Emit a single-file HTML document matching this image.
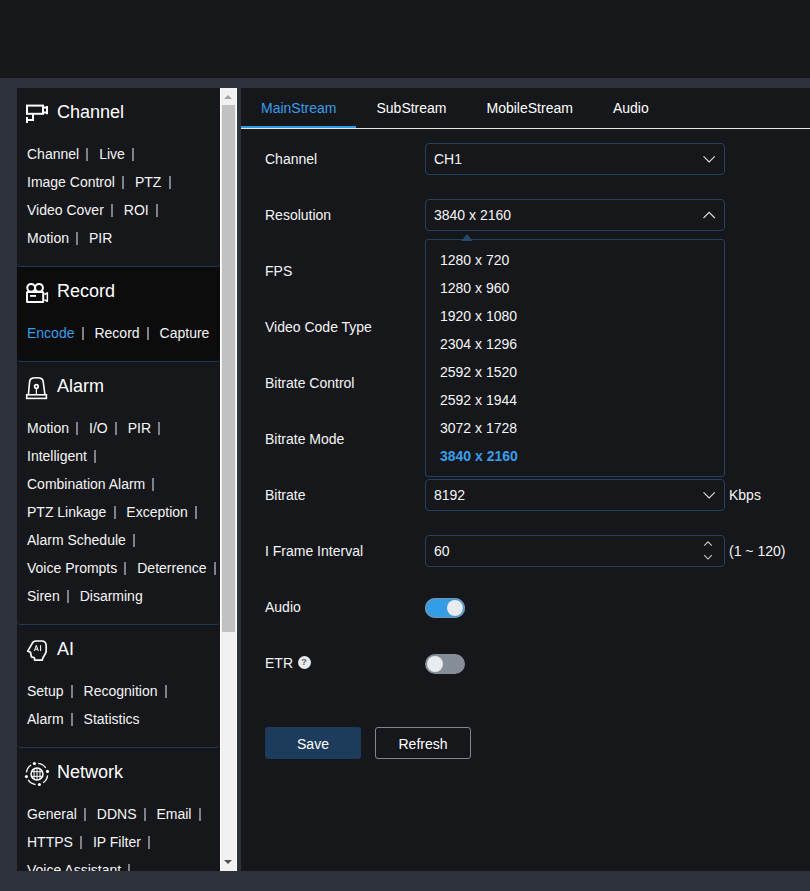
<!DOCTYPE html>
<html><head><meta charset="utf-8">
<style>
*{box-sizing:border-box;margin:0;padding:0}
html,body{width:810px;height:891px;overflow:hidden}
body{background:#2d3139;font-family:"Liberation Sans",sans-serif;color:#f2f2f2;position:relative;font-size:14px}
#top{position:absolute;left:0;top:0;width:810px;height:78px;background:#16181c}
#side{position:absolute;left:17px;top:88px;width:203px;height:783px;background:#15171b;overflow:hidden}
#sb{position:absolute;left:220px;top:88px;width:17px;height:783px;background:#f1f1f1;box-shadow:inset 1px 0 0 #fff,inset -1px 0 0 #fff}
#sb .th{position:absolute;left:2px;top:17px;width:13px;height:527px;background:#c1c1c1}
#sb .up{position:absolute;left:4px;top:7px;width:0;height:0;border-left:4px solid transparent;border-right:4px solid transparent;border-bottom:4px solid #a3a3a3}
#sb .dn{position:absolute;left:4px;top:772px;width:0;height:0;border-left:4px solid transparent;border-right:4px solid transparent;border-top:4px solid #505050}
#main{position:absolute;left:241px;top:88px;width:569px;height:783px;background:#15171b;overflow:hidden}
.sec{position:absolute;left:0;width:203px;border-bottom:1px solid #1e3a56;border-radius:0 0 4px 4px}
.hd{position:absolute;left:40px;font-size:18px;font-weight:normal;color:#fff;line-height:20px;white-space:nowrap}
.sec svg{position:absolute;left:0;top:0}
.ln{position:absolute;left:10px;font-size:14px;line-height:16px;white-space:nowrap;color:#f5f5f5}
.ln i{display:inline-block;width:2px;height:13px;background:#808287;vertical-align:-2px;margin:0 10.85px 0 7.15px}
.ln b{font-weight:normal;color:#399de8}
.tab{float:left;height:40px;line-height:40px;font-size:14px;padding:0 20px;color:#fff;white-space:nowrap}
.tab.on{color:#399de8;border-bottom:2px solid #2d9be8;height:40px}
#tl{position:absolute;left:0;top:40px;width:569px;height:1px;background:#e8e8e8}
.lb{position:absolute;left:24px;font-size:14px;line-height:16px;white-space:nowrap;color:#f5f5f5}
.sel{position:absolute;left:184px;width:300px;height:32px;border:1px solid #224262;border-radius:4px;font-size:14px;line-height:30px;padding-left:8px;color:#f5f5f5}
.sel svg{position:absolute;right:8px;top:10.5px}
#dd{position:absolute;left:184px;top:151px;width:300px;height:238px;border:1px solid #224262;border-radius:3px;background:#15171b}
#dd div{position:absolute;left:14px;font-size:14px;line-height:16px;white-space:nowrap;color:#f5f5f5}
.un{position:absolute;left:488px;font-size:14px;line-height:16px;white-space:nowrap;color:#f5f5f5}
.tg{position:absolute;left:184px;width:40px;height:20px;border-radius:10px}
.tg span{position:absolute;top:2px;width:16px;height:16px;border-radius:8px;background:#e8ebef}
.btn{position:absolute;top:639px;width:96px;height:32px;border-radius:3px;font-size:14px;line-height:34px;text-align:center;color:#fff}
</style></head><body>
<div id="top"></div>
<div id="side">
<div class="sec" style="top:0;height:179px"></div>
<div class="sec" style="top:179px;height:95px;background:#0c0c0d"></div>
<div class="sec" style="top:274px;height:263px"></div>
<div class="sec" style="top:537px;height:123px"></div>
<svg width="203" height="782" viewBox="17 88 203 782" style="position:absolute;left:0;top:0" fill="none" stroke="#fff" stroke-width="2">
<!-- channel -->
<rect x="27" y="105.6" width="16" height="8.2"/>
<path d="M44 107.5h3M44 112.5h3M47 106v8.2M33 114v6h-6M27 117v6"/>
<!-- record -->
<circle cx="31.2" cy="287.8" r="3.9"/><circle cx="39" cy="287.8" r="3.9"/>
<rect x="27" y="292" width="16.2" height="10.1" rx="0.5"/>
<path d="M30 295.9h6" stroke-width="1.8"/>
<path d="M44.4 294.5L47.35 292.9V301.3L44.4 299.7" stroke-width="1.5" stroke-linejoin="round"/>
<!-- alarm -->
<g stroke-width="1.6">
<rect x="26.7" y="394.8" width="19.7" height="3.6"/>
<path d="M28.4 394.5L29.6 381.6Q30 378.4 33 378Q36.4 377.5 39.8 378Q42.8 378.4 43.2 381.6L44.9 394.5"/>
<circle cx="36.4" cy="386.4" r="1.8"/>
<path d="M36.4 388.4v6" stroke-width="1.2"/>
</g>
<!-- ai -->
<path d="M31.9 643.8Q33.2 641 36 641H41.6Q46.2 641 46.2 646V650.5Q46.2 652.3 45.2 654L43 657.6L42.2 660.2H34.6L34.3 657.7L31.4 656.9L30.5 652.3L27.8 651.2Z" stroke-width="1.7" stroke-linejoin="round"/><path d="M34.4 651L36.35 645.3L38.3 651M35.1 649.2H37.6M40.6 645.2V651" stroke-width="1" stroke-linejoin="round"/>
<!-- network -->
<g stroke-width="1.5">
<circle cx="37" cy="774" r="6"/>
<path d="M31.3 771.7h11.4M31.3 776.3h11.4M34.05 768.8v10.4M37.02 768v12M40 768.8v10.4" stroke-width="1"/>
<circle cx="37" cy="774" r="10.7" stroke-width="1.3" stroke-dasharray="8.96 7.85" stroke-dashoffset="-3.8" transform="rotate(-104 37 774)"/>
</g>
<g fill="#fff" stroke="none">
<circle cx="34.4" cy="763.5" r="1.55"/><circle cx="47.5" cy="771.4" r="1.55"/><circle cx="26.4" cy="776.6" r="1.55"/><circle cx="39.4" cy="784.5" r="1.55"/>
</g>

</svg>
<h3 class="hd" style="top:14px">Channel</h3>
<div class="ln" style="top:58px">Channel<i></i>Live<i></i></div>
<div class="ln" style="top:86px">Image Control<i></i>PTZ<i></i></div>
<div class="ln" style="top:114px">Video Cover<i></i>ROI<i></i></div>
<div class="ln" style="top:142px">Motion<i></i>PIR</div>
<h3 class="hd" style="top:193px">Record</h3>
<div class="ln" style="top:237px"><b>Encode</b><i></i>Record<i></i>Capture</div>
<h3 class="hd" style="top:288px">Alarm</h3>
<div class="ln" style="top:332px">Motion<i></i>I/O<i></i>PIR<i></i></div>
<div class="ln" style="top:360px">Intelligent<i></i></div>
<div class="ln" style="top:388px">Combination Alarm<i></i></div>
<div class="ln" style="top:416px">PTZ Linkage<i></i>Exception<i></i></div>
<div class="ln" style="top:444px">Alarm Schedule<i></i></div>
<div class="ln" style="top:472px">Voice Prompts<i></i>Deterrence<i></i></div>
<div class="ln" style="top:500px">Siren<i></i>Disarming</div>
<h3 class="hd" style="top:551px">AI</h3>
<div class="ln" style="top:595px">Setup<i></i>Recognition<i></i></div>
<div class="ln" style="top:623px">Alarm<i></i>Statistics</div>
<h3 class="hd" style="top:674px">Network</h3>
<div class="ln" style="top:718px">General<i></i>DDNS<i></i>Email<i></i></div>
<div class="ln" style="top:746px">HTTPS<i></i>IP Filter<i></i></div>
<div class="ln" style="top:774px">Voice Assistant<i></i></div>
</div>
<div id="sb"><div class="up"></div><div class="th"></div><div class="dn"></div></div>
<div id="main">
<div class="tab on">MainStream</div>
<div class="tab">SubStream</div>
<div class="tab">MobileStream</div>
<div class="tab">Audio</div>
<div id="tl"></div>
<div class="lb" style="top:63px">Channel</div>
<div class="lb" style="top:119px">Resolution</div>
<div class="lb" style="top:175px">FPS</div>
<div class="lb" style="top:231px">Video Code Type</div>
<div class="lb" style="top:287px">Bitrate Control</div>
<div class="lb" style="top:343px">Bitrate Mode</div>
<div class="lb" style="top:399px">Bitrate</div>
<div class="lb" style="top:455px">I Frame Interval</div>
<div class="lb" style="top:511px">Audio</div>
<div class="lb" style="top:567px">ETR</div>
<div class="sel" style="top:55px">CH1<svg width="14" height="9" viewBox="0 0 14 9" fill="none" stroke="#dedfe2" stroke-width="1.1"><path d="M1.5 1.3L7.15 7L12.8 1.3"/></svg></div>
<div class="sel" style="top:111px">3840 x 2160<svg width="14" height="9" viewBox="0 0 14 9" fill="none" stroke="#dedfe2" stroke-width="1.1"><path d="M1.5 7L7.15 1.3L12.8 7"/></svg></div>
<div class="sel" style="top:391px">8192<svg width="14" height="9" viewBox="0 0 14 9" fill="none" stroke="#dedfe2" stroke-width="1.1"><path d="M1.5 1.3L7.15 7L12.8 1.3"/></svg></div>
<div class="sel" style="top:447px">60<svg width="10" height="22" viewBox="0 0 10 22" fill="none" stroke="#cfd0d3" stroke-width="1.05" style="right:11px;top:4px"><path d="M1.2 5.6l3.8-3.8 3.8 3.8M1.2 15.2l3.8 3.8 3.8-3.8"/></svg></div>
<div class="un" style="top:399px">Kbps</div>
<div class="un" style="top:455px">(1 ~ 120)</div>
<svg style="position:absolute;left:220px;top:146px;z-index:2" width="12" height="7" viewBox="0 0 12 7"><path d="M0.2 7L6 0L11.8 7z" fill="#25486b"/></svg>
<div id="dd">
<div style="top:12px">1280 x 720</div>
<div style="top:40px">1280 x 960</div>
<div style="top:68px">1920 x 1080</div>
<div style="top:96px">2304 x 1296</div>
<div style="top:124px">2592 x 1520</div>
<div style="top:152px">2592 x 1944</div>
<div style="top:180px">3072 x 1728</div>
<div style="top:208px;color:#399de8;font-weight:bold">3840 x 2160</div>
</div>
<div class="tg" style="top:510px;background:#339de6;box-shadow:inset 0 0 0 1px #8493a1"><span style="left:22px"></span></div>
<div class="tg" style="top:566px;background:#868e99"><span style="left:2px"></span></div>
<div style="position:absolute;left:56.5px;top:568px;width:13px;height:13px;border-radius:6.5px;background:#e9eaee;color:#5a5f69;font-size:9px;font-weight:bold;line-height:13px;text-align:center">?</div>
<div class="btn" style="left:24px;background:#1d3b5a">Save</div>
<div class="btn" style="left:134px;border:1px solid #82868e;line-height:32px">Refresh</div>
</div>
</body></html>
